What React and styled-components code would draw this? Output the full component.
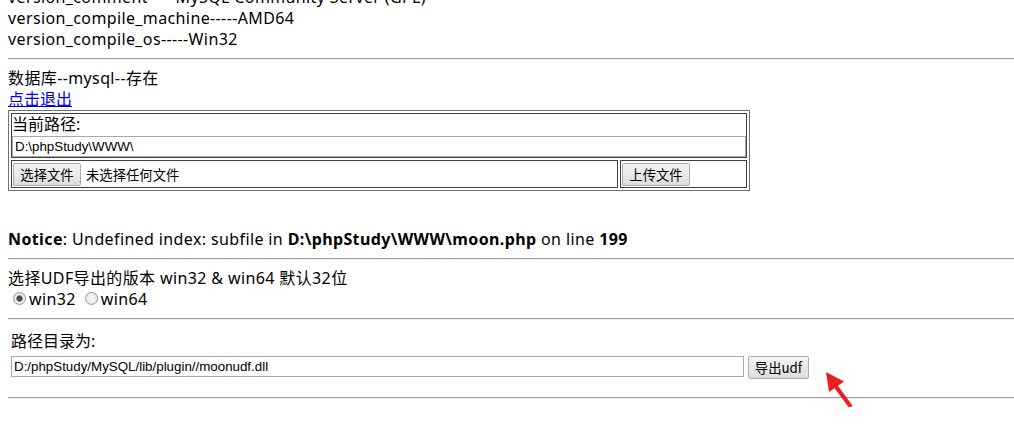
import React from "react";
import styled, { createGlobalStyle } from "styled-components";

const GlobalStyle = createGlobalStyle`
  html, body {
    margin: 0;
    padding: 0;
    background: #ffffff;
  }
  body {
    font-family: "Noto Sans", "Noto Sans CJK SC", sans-serif;
    font-size: 16px;
    line-height: 21px;
    letter-spacing: 0.38px;
    color: #000000;
  }
`;

const Page = styled.div`
  position: relative;
  padding-left: 8px;
  margin-top: -13px;
`;

const Line = styled.div`
  white-space: nowrap;
`;

const Rule = styled.hr`
  margin: 8px 0;
  height: 0;
  border: 0;
  border-top: 1px solid #9c9c9c;
  border-bottom: 1px solid #eeeeee;
`;

const Link = styled.a`
  color: #0000ee;
  text-decoration: underline;
  letter-spacing: 0;
  cursor: pointer;
`;

/* upload form: table border=1 look */
const PathBox = styled.div`
  box-sizing: border-box;
  width: 742px;
  border: 1px solid #707070;
  padding: 2px;
  display: flex;
  flex-direction: column;
  gap: 2px;
`;

const BoxRow = styled.div`
  display: flex;
  gap: 2px;
`;

const BoxCell = styled.div`
  box-sizing: border-box;
  width: ${(p) => p.$w}px;
  border: 1px solid #404040;
  display: flex;
  flex-direction: ${(p) => (p.$stack ? "column" : "row")};
  align-items: ${(p) => (p.$stack ? "stretch" : "center")};
  min-height: ${(p) => (p.$stack ? "auto" : "28px")};
  letter-spacing: 0;
`;

const TextInput = styled.input`
  box-sizing: border-box;
  width: ${(p) => p.$w}px;
  height: 21px;
  margin: ${(p) => p.$m || "0"};
  padding: 1px 2px;
  border: 1px solid #a9a9a9;
  border-radius: 0;
  font-family: "Liberation Sans", Arial, sans-serif;
  font-size: 13.33px;
  color: #000000;
  background: #ffffff;
  outline: none;
`;

const Button = styled.button`
  box-sizing: border-box;
  width: ${(p) => p.$w}px;
  height: 23px;
  margin: 0 0 0 ${(p) => p.$ml || 0}px;
  padding: 0;
  border: 1px solid #adadad;
  border-radius: 2px;
  background: linear-gradient(#f4f4f4, #dedede);
  font-family: "Noto Sans CJK SC", "Noto Sans", sans-serif;
  font-size: 13.33px;
  line-height: 21px;
  color: #000000;
  flex: none;
`;

const NoFile = styled.span`
  margin-left: 5px;
  font-family: "Noto Sans CJK SC", sans-serif;
  font-size: 13.33px;
  white-space: nowrap;
`;

const Notice = styled(Line)`
  margin-top: 38px;
`;

const RadioLine = styled.div`
  display: flex;
  align-items: center;
  white-space: nowrap;
`;

const Radio = styled.span`
  box-sizing: border-box;
  display: inline-block;
  width: 13px;
  height: 13px;
  margin: -2px 3px 0 5px;
  border-radius: 50%;
  border: 1px solid #9a9a9a;
  background: ${(p) =>
    p.$on
      ? "radial-gradient(circle, #4a4a4a 0 2.5px, #8a8a8a 3px, #ececec 3.6px, #dcdcdc 100%)"
      : "radial-gradient(circle, #f6f6f6 0, #e2e2e2 100%)"};
  flex: none;
`;

const RadioText = styled.span`
  margin-right: 4px;
`;

const ExportBox = styled.div`
  padding: 3px 3px 0;
  display: flex;
  flex-direction: column;
  gap: 4px;
  letter-spacing: 0;
`;

const ExportRow = styled.div`
  display: flex;
  align-items: flex-start;
  gap: 4px;
`;

const BottomRule = styled(Rule)`
  margin-top: 18px;
`;

const Arrow = styled.svg`
  position: absolute;
  left: 818px;
  top: 381px;
`;

export default function App() {
  return (
    <>
      <GlobalStyle />
      <Page>
        <Line>version_comment-----MySQL Community Server (GPL)</Line>
        <Line>version_compile_machine-----AMD64</Line>
        <Line>version_compile_os-----Win32</Line>
        <Rule />
        <Line>数据库--mysql--存在</Line>
        <Line>
          <Link>点击退出</Link>
        </Line>

        <PathBox>
          <BoxRow>
            <BoxCell $w={736} $stack>
              <Line>当前路径:</Line>
              <TextInput $w={734} $m="1px 0 0" defaultValue="D:\phpStudy\WWW\" />
            </BoxCell>
          </BoxRow>
          <BoxRow>
            <BoxCell $w={607}>
              <Button $w={68} $ml={1}>选择文件</Button>
              <NoFile>未选择任何文件</NoFile>
            </BoxCell>
            <BoxCell $w={127}>
              <Button $w={68} $ml={1}>上传文件</Button>
            </BoxCell>
          </BoxRow>
        </PathBox>

        <Notice>
          <b>Notice</b>: Undefined index: subfile in{" "}
          <b>D:\phpStudy\WWW\moon.php</b> on line <b>199</b>
        </Notice>
        <Rule />
        <Line>选择UDF导出的版本 win32 &amp; win64 默认32位</Line>
        <RadioLine>
          <Radio $on />
          <RadioText>win32</RadioText>
          <Radio />
          <RadioText>win64</RadioText>
        </RadioLine>
        <Rule />

        <ExportBox>
          <Line>路径目录为:</Line>
          <ExportRow>
            <TextInput $w={733} defaultValue="D:/phpStudy/MySQL/lib/plugin//moonudf.dll" />
            <Button $w={61}>导出udf</Button>
          </ExportRow>
        </ExportBox>
        <BottomRule />

        <Arrow width="40" height="45" viewBox="0 0 40 45">
          <line x1="33" y1="39" x2="16" y2="16" stroke="#ec1c24" strokeWidth="4" />
          <polygon points="8,4 26,13.5 11,24" fill="#ec1c24" />
        </Arrow>
      </Page>
    </>
  );
}
